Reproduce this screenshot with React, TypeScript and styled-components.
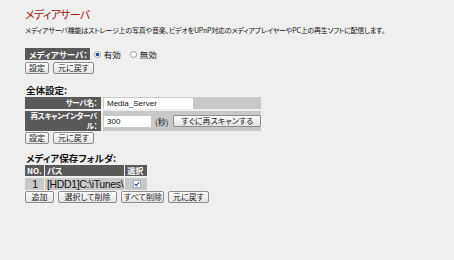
import React from "react";
import styled, { createGlobalStyle } from "styled-components";

const Global = createGlobalStyle`
  html, body { margin: 0; padding: 0; background: #efefef; }
  body {
    font-family: "Noto Sans CJK JP", "DejaVu Sans", sans-serif;
    color: #111;
    font-feature-settings: "palt";
  }
`;

const Page = styled.div`
  padding: 6px 0 0 25px;
  width: 429px;
  height: 254px;
  overflow: hidden;
`;

const Title = styled.h1`
  margin: 0;
  font-size: 11px;
  line-height: 16px;
  font-weight: normal;
  color: #a01010;
  letter-spacing: -0.7px;
`;

const Desc = styled.p`
  margin: 3px 0 0 0;
  font-size: 7px;
  line-height: 11px;
  letter-spacing: -0.2px;
  white-space: nowrap;
`;

const ModeRow = styled.div`
  margin-top: 12px;
  display: flex;
  align-items: center;
  height: 12px;
`;

const DarkLabel = styled.div`
  background: #595959;
  color: #fff;
  font-size: 8.5px;
  font-weight: bold;
  height: 12px;
  line-height: 12px;
  padding: 0 2px 0 4px;
  white-space: nowrap;
`;

const RadioOpt = styled.label`
  display: flex;
  align-items: center;
  font-size: 8.5px;
  margin-left: 4px;
  margin-right: 5px;
  gap: 3px;
`;

const RadioDot = styled.span<{ $on?: boolean }>`
  width: 7px;
  height: 7px;
  border-radius: 50%;
  border: 1px solid #9a9a9a;
  background: ${(p) =>
    p.$on ? "radial-gradient(circle, #2a4f9a 0 1.5px, #fff 2px)" : "#fff"};
  box-sizing: border-box;
`;

const BtnRow = styled.div<{ $mt?: number }>`
  display: flex;
  gap: 4px;
  margin-top: ${(p) => p.$mt ?? 2}px;
`;

const Btn = styled.button<{ $w?: number }>`
  height: 12px;
  width: ${(p) => (p.$w ? `${p.$w}px` : "auto")};
  padding: 0 2px;
  font-family: inherit;
  font-feature-settings: "palt";
  font-size: 8px;
  line-height: 10px;
  color: #222;
  background: linear-gradient(#fdfdfd, #e4e4e4);
  border: 1px solid #8d8d8d;
  border-radius: 2px;
  box-sizing: border-box;
  white-space: nowrap;
`;

const Section = styled.div<{ $mt: number }>`
  margin-top: ${(p) => p.$mt}px;
  font-size: 9.5px;
  font-weight: bold;
  line-height: 11px;
  padding-left: 1px;
`;

const Table = styled.table`
  border-collapse: separate;
  border-spacing: 0 2px;
  margin: -1px 0 -1px 0;
  table-layout: fixed;
`;

const LabelCell = styled.td`
  background: #595959;
  color: #fff;
  font-size: 7.6px;
  font-weight: bold;
  text-align: right;
  width: 78px;
  padding: 0 4px 0 0;
  line-height: 10px;
  box-sizing: border-box;
  border-right: 2px solid #efefef;
  white-space: nowrap;
  overflow: hidden;
  letter-spacing: -0.4px;
`;

const LabelLine = styled.div`
  display: block;
`;

const ValueCell = styled.td<{ $h: number }>`
  background: #c8c8c8;
  width: 156px;
  height: ${(p) => p.$h}px;
  padding: 0 0 0 1px;
  box-sizing: border-box;
  font-size: 8.5px;
`;

const Inline = styled.div`
  display: flex;
  align-items: center;
`;

const TextInput = styled.div<{ $w: number }>`
  width: ${(p) => p.$w}px;
  height: 11px;
  background: #fff;
  font-size: 8px;
  line-height: 11px;
  padding-left: 3px;
  box-sizing: border-box;
  font-family: "Liberation Sans", Arial, sans-serif;
`;

const Unit = styled.span`
  margin: 0 5px 0 4px;
  font-size: 8px;
`;

const FolderTable = styled.table`
  border-collapse: separate;
  border-spacing: 1px 2px;
  margin: -1px 0 -1px -1px;
  table-layout: fixed;
`;

const Th = styled.th<{ $w: number; $align?: string }>`
  background: #595959;
  color: #fff;
  font-size: 8px;
  font-weight: bold;
  width: ${(p) => p.$w}px;
  height: 11px;
  padding: 0 2px;
  text-align: ${(p) => p.$align ?? "left"};
  box-sizing: border-box;
  line-height: 11px;
  overflow: hidden;
  white-space: nowrap;
`;

const Td = styled.td<{ $align?: string }>`
  background: #c8c8c8;
  height: 12px;
  font-size: 10.5px;
  line-height: 12px;
  padding: 0 1px 0 2px;
  text-align: ${(p) => p.$align ?? "left"};
  font-family: "Liberation Sans", Arial, sans-serif;
  white-space: nowrap;
  overflow: hidden;
  letter-spacing: -0.35px;
`;

const Check = styled.span`
  display: inline-flex;
  align-items: center;
  justify-content: center;
  width: 8px;
  height: 8px;
  background: #fff;
  border: 1px solid #a3acbd;
  box-sizing: border-box;
  vertical-align: middle;
  position: relative;
  top: -1px;
`;

export default function App() {
  return (
    <>
      <Global />
      <Page>
        <Title>メディアサーバ</Title>
        <Desc>
          メディアサーバ機能はストレージ上の写真や音楽、ビデオをUPnP対応のメディアプレイヤーやPC上の再生ソフトに配信します。
        </Desc>
        <ModeRow>
          <DarkLabel>メディアサーバ：</DarkLabel>
          <RadioOpt>
            <RadioDot $on />
            有効
          </RadioOpt>
          <RadioOpt>
            <RadioDot />
            無効
          </RadioOpt>
        </ModeRow>
        <BtnRow>
          <Btn $w={24}>設定</Btn>
          <Btn $w={41}>元に戻す</Btn>
        </BtnRow>

        <Section $mt={11}>全体設定:</Section>
        <Table>
          <tbody>
            <tr>
              <LabelCell>サーバ名：</LabelCell>
              <ValueCell $h={12}>
                <TextInput $w={89}>Media_Server</TextInput>
              </ValueCell>
            </tr>
            <tr>
              <LabelCell>
                <LabelLine>再スキャンインターバ</LabelLine>
                <LabelLine>ル：</LabelLine>
              </LabelCell>
              <ValueCell $h={20}>
                <Inline>
                  <TextInput $w={47}>300</TextInput>
                  <Unit>(秒)</Unit>
                  <Btn $w={88}>すぐに再スキャンする</Btn>
                </Inline>
              </ValueCell>
            </tr>
          </tbody>
        </Table>
        <BtnRow $mt={0}>
          <Btn $w={24}>設定</Btn>
          <Btn $w={41}>元に戻す</Btn>
        </BtnRow>

        <Section $mt={9}>メディア保存フォルダ:</Section>
        <FolderTable>
          <thead>
            <tr>
              <Th $w={19}>NO.</Th>
              <Th $w={78}>パス</Th>
              <Th $w={22}>選択</Th>
            </tr>
          </thead>
          <tbody>
            <tr>
              <Td $align="center">1</Td>
              <Td>[HDD1]C:\iTunes\</Td>
              <Td $align="center">
                <Check>
                  <svg width="6" height="6" viewBox="0 0 6 6">
                    <path d="M0.8 3 L2.3 4.6 L5.2 1.2" fill="none" stroke="#2c4a86" strokeWidth="1.1" />
                  </svg>
                </Check>
              </Td>
            </tr>
          </tbody>
        </FolderTable>
        <BtnRow $mt={0}>
          <Btn $w={29}>追加</Btn>
          <Btn $w={59}>選択して削除</Btn>
          <Btn $w={43}>すべて削除</Btn>
          <Btn $w={41}>元に戻す</Btn>
        </BtnRow>
      </Page>
    </>
  );
}
